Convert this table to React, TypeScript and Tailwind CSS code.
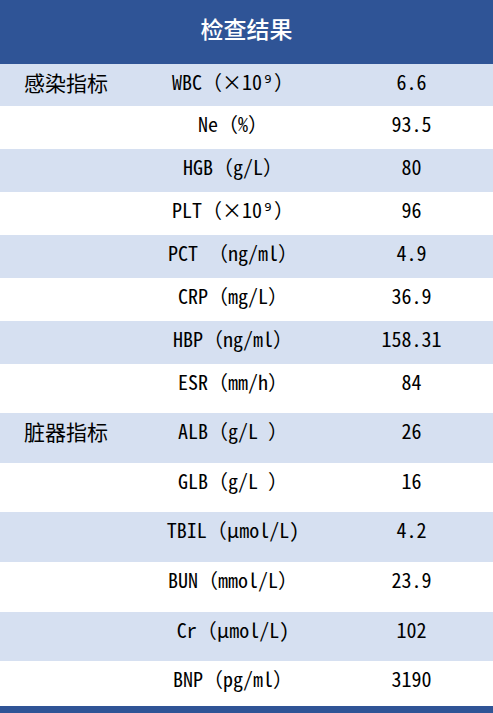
const CJK = "font-['Noto_Sans_CJK_SC','Noto_Sans',sans-serif]";
const MONO =
  "font-['Noto_Sans_Mono_CJK_SC','DejaVu_Sans_Mono','Noto_Sans_CJK_SC',monospace]";

interface ResultRow {
  category?: string;
  name: string;
  value: string;
  height: string;
}

const rows: ResultRow[] = [
  { category: '感染指标', name: 'WBC（×10⁹）', value: '6.6', height: 'h-[42px]' },
  { name: 'Ne（%）', value: '93.5', height: 'h-[43px]' },
  { name: 'HGB（g/L）', value: '80', height: 'h-[43px]' },
  { name: 'PLT（×10⁹）', value: '96', height: 'h-[43px]' },
  { name: 'PCT （ng/ml）', value: '4.9', height: 'h-[43px]' },
  { name: 'CRP（mg/L）', value: '36.9', height: 'h-[43px]' },
  { name: 'HBP（ng/ml）', value: '158.31', height: 'h-[43px]' },
  { name: 'ESR（mm/h）', value: '84', height: 'h-[49px]' },
  { category: '脏器指标', name: 'ALB（g/L ）', value: '26', height: 'h-[50px]' },
  { name: 'GLB（g/L ）', value: '16', height: 'h-[49px]' },
  { name: 'TBIL（μmol/L)', value: '4.2', height: 'h-[50px]' },
  { name: 'BUN（mmol/L）', value: '23.9', height: 'h-[50px]' },
  { name: 'Cr（μmol/L)', value: '102', height: 'h-[49px]' },
  { name: 'BNP（pg/ml）', value: '3190', height: 'h-[45px]' },
];

export default function App() {
  return (
    <div className="w-[493px] bg-white text-black">
      {/* Header */}
      <div className="h-[64px] bg-[#2f5496] pt-[12px] text-center">
        <span className={`${CJK} text-[23px] leading-[32px] font-medium text-white`}>
          检查结果
        </span>
      </div>

      {rows.map((row, i) => (
        <div
          key={row.name}
          className={`flex items-start pt-[4px] ${row.height} ${
            i % 2 === 0 ? 'bg-[#d6e0f1]' : 'bg-white'
          }`}
        >
          <div className={`w-[136px] pl-[24px] ${CJK} text-[21px] leading-[28px]`}>
            {row.category}
          </div>
          <div className={`w-[194px] text-center ${MONO} text-[20px] leading-[28px]`}>
            {row.name}
          </div>
          <div className={`flex-1 text-center ${MONO} text-[20px] leading-[28px]`}>
            {row.value}
          </div>
        </div>
      ))}

      {/* Bottom rule */}
      <div className="h-[7px] bg-[#2f5496]" />
    </div>
  );
}
